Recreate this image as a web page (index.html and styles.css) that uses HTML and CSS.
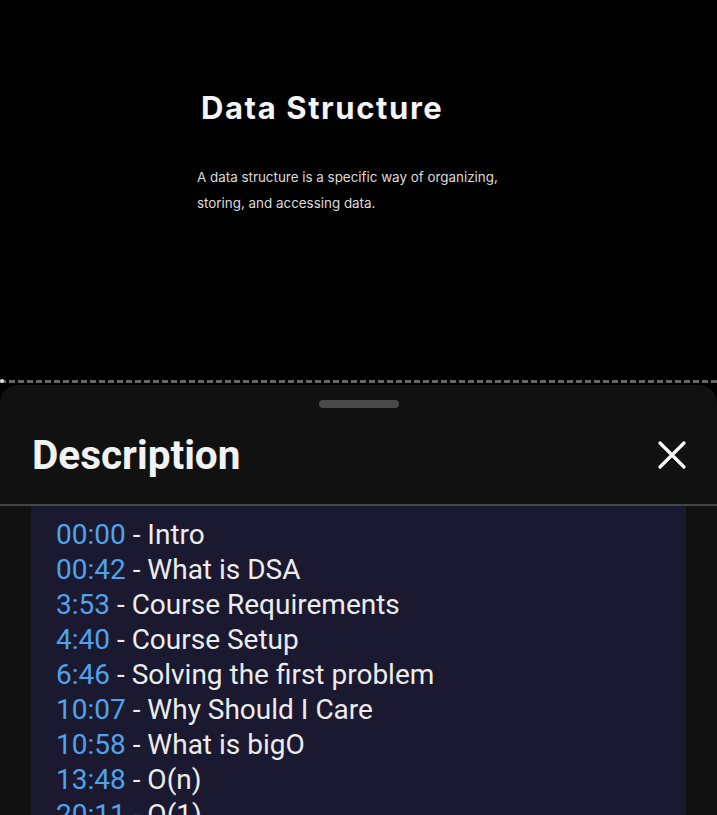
FILE: index.html
```html
<!DOCTYPE html>
<html>
<head>
<meta charset="utf-8">
<link rel="stylesheet" href="styles.css">
</head>
<body>
<div class="page">
  <section class="video">
    <div class="slide">
      <h1 class="slide-title">Data Structure</h1>
      <p class="slide-text">A data structure is a specific way of organizing,<br>storing, and accessing data.</p>
    </div>
  </section>
  <div class="progress"><span class="dot"></span></div>
  <section class="sheet">
    <div class="handle-row"><div class="handle"></div></div>
    <header class="sheet-head">
      <h2 class="sheet-title">Description</h2>
      <svg class="close" width="30" height="30" viewBox="0 0 30 30"><path d="M3 3L27 27M27 3L3 27" stroke="#fff" stroke-width="3.2" stroke-linecap="round"/></svg>
    </header>
    <div class="content">
      <ul class="chapters">
        <li><span class="ts">00:00</span> - Intro</li>
        <li><span class="ts">00:42</span> - What is DSA</li>
        <li><span class="ts">3:53</span> - Course Requirements</li>
        <li><span class="ts">4:40</span> - Course Setup</li>
        <li><span class="ts">6:46</span> - Solving the first problem</li>
        <li><span class="ts">10:07</span> - Why Should I Care</li>
        <li><span class="ts">10:58</span> - What is bigO</li>
        <li><span class="ts">13:48</span> - O(n)</li>
        <li><span class="ts">20:11</span> - O(1)</li>
      </ul>
    </div>
  </section>
</div>
</body>
</html>
```
FILE: styles.css
```css
* { box-sizing: border-box; }
html, body { margin: 0; padding: 0; background: #000; }
body { width: 717px; height: 815px; overflow: hidden; font-family: Roboto, "Noto Sans", sans-serif; }
.page { display: flex; flex-direction: column; height: 815px; }
.video { height: 380px; background: #000; display: flex; justify-content: flex-start; padding-left: 197px; flex-shrink: 0; }
.slide { padding-top: 88px; width: 340px; }
.slide-title { margin: 0 0 0 4px; font-family: Inter, sans-serif; font-weight: 700; font-size: 31px; color: #f4f4f4; line-height: 40px; letter-spacing: 1.6px; }
.slide-text { margin: 36px 0 0 0; font-family: Inter, sans-serif; font-size: 13.4px; line-height: 26px; color: #dcdcdc; }
.progress { height: 3px; flex-shrink: 0; position: relative; background: repeating-linear-gradient(90deg, #666 0 6px, transparent 6px 9px); }
.dot { position: absolute; left: 0; top: -1px; width: 4px; height: 4px; border-radius: 50%; background: #ddd; }
.sheet { flex: 1; background: #111; border-radius: 18px 18px 0 0; margin-top: 2px; display: flex; flex-direction: column; overflow: hidden; min-height: 0; }
.handle-row { display: flex; justify-content: center; padding-top: 15px; flex-shrink: 0; }
.handle { width: 80px; height: 8px; border-radius: 4px; background: #4a4a4a; }
.sheet-head { flex-shrink: 0; display: flex; align-items: center; justify-content: space-between; padding: 0 30px 2px 32px; height: 98px; border-bottom: 2px solid #444; }
.sheet-title { margin: 0; font-weight: 700; font-size: 40.5px; color: #f2f2f2; }
.close { display: block; }
.content { margin: 0 31px; background: #1b1930; flex: 1; padding: 11px 25px; min-height: 0; overflow: hidden; }
.chapters { list-style: none; margin: 0; padding: 0; }
.chapters li { font-size: 28px; line-height: 35px; color: #ececec; white-space: nowrap; }
.ts { color: #4ea3ec; }
```
